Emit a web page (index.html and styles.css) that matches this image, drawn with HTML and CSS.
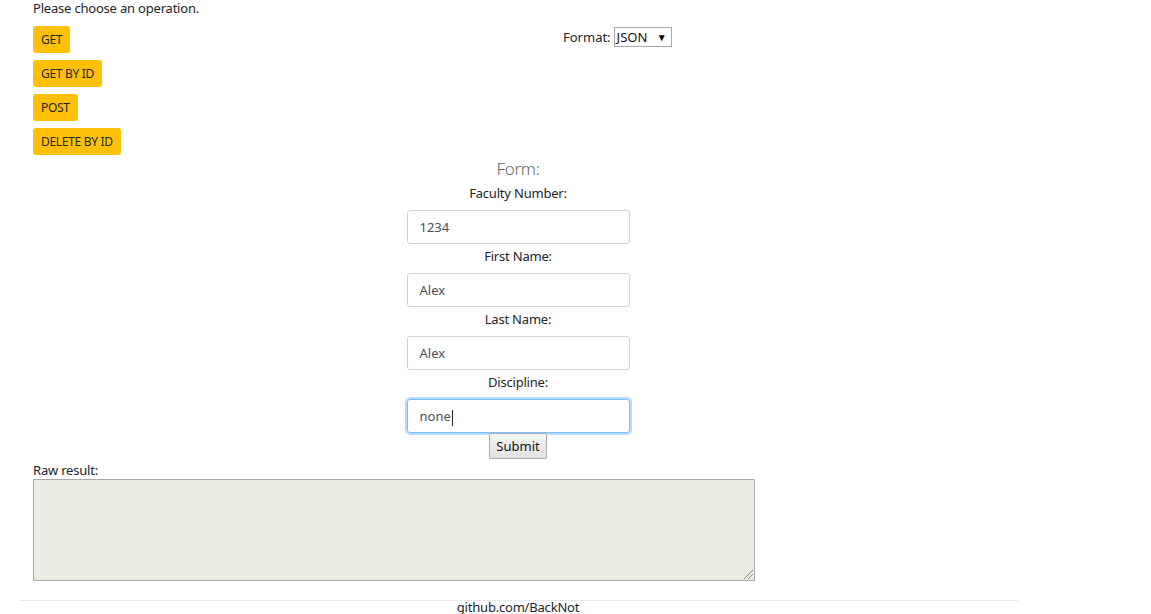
FILE: index.html
```html
<!DOCTYPE html>
<html>
<head>
<meta charset="utf-8">
<link rel="stylesheet" href="styles.css">
</head>
<body>
<div class="container">
  <div class="intro">Please choose an operation.</div>
  <div class="top">
    <div class="ops">
      <button class="op">GET</button>
      <button class="op">GET BY ID</button>
      <button class="op">POST</button>
      <button class="op">DELETE BY ID</button>
    </div>
    <div class="format">
      <span>Format:</span>
      <span class="select">JSON <span class="arrow">▼</span></span>
    </div>
  </div>
  <div class="form">
    <div class="title">Form:</div>
    <label>Faculty Number:</label>
    <div class="input">1234</div>
    <label>First Name:</label>
    <div class="input">Alex</div>
    <label>Last Name:</label>
    <div class="input">Alex</div>
    <label>Discipline:</label>
    <div class="input focus">none<span class="caret"></span></div>
    <button class="submit">Submit</button>
  </div>
  <div class="raw-label">Raw result:</div>
  <div class="raw"><span class="grip"></span></div>
  <hr class="rule">
  <div class="footer">github.com/BackNot</div>
</div>
</body>
</html>
```
FILE: styles.css
```css
html, body { margin: 0; padding: 0; background: #fff; }
body { font-family: "Noto Sans", "Open Sans", sans-serif; font-size: 13px; color: #212529; overflow: hidden; height: 614px; }
.container { width: 1000px; margin-left: 18px; padding: 0 15px; box-sizing: border-box; }
.intro { height: 16px; line-height: 16px; font-size: 13px; letter-spacing: -0.2px; }
.top { display: flex; margin-top: 10px; }
.ops { display: flex; flex-direction: column; align-items: flex-start; gap: 7px; width: 530px; }
.op { background: #ffc107; border: none; border-radius: 3px; height: 27px; padding: 0 8px; font-family: inherit; font-size: 12px; color: #212529; letter-spacing: -0.3px; }
.format { display: flex; align-items: center; gap: 3px; height: 20px; margin-top: 1px; }
.select { display: inline-flex; align-items: center; border: 1px solid #a9a9a9; height: 20px; padding: 0 4px 0 2px; font-size: 13px; box-sizing: border-box; width: 58px; justify-content: space-between; color: #111; }
.arrow { font-size: 10px; color: #000; }
.form { display: flex; flex-direction: column; align-items: center; width: 1000px; margin-left: -15px; }
.title { font-size: 17px; font-weight: 300; color: #666; height: 22px; line-height: 22px; margin-top: 3px; letter-spacing: -0.3px; }
label { display: block; height: 20px; line-height: 20px; margin-top: 6px; margin-bottom: 7px; letter-spacing: -0.2px; }
.title + label { margin-top: 3px; }
.input { width: 223px; height: 34px; box-sizing: border-box; border: 1px solid #ced4da; border-radius: 3px; padding: 0 12px; line-height: 32px; font-size: 13px; color: #495057; }
.input + label { margin-top: 2px; }
.focus { border-color: #80bdff; box-shadow: 0 0 0 2px #b8daff; }
.caret { display: inline-block; width: 1px; height: 16px; background: #222; vertical-align: middle; margin-left: 1px; }
.submit { height: 26px; padding: 0 6px; border: 1px solid #adadad; background: linear-gradient(#f3f3f3, #e2e2e2); border-radius: 1px; font-family: inherit; font-size: 13px; color: #111; }
.raw-label { height: 20px; line-height: 22px; letter-spacing: -0.2px; }
.raw { width: 722px; height: 102px; box-sizing: border-box; border: 1px solid #a9a9a9; background: #ebeae3; position: relative; }
.grip { position: absolute; right: 1px; bottom: 1px; width: 9px; height: 9px; background: linear-gradient(135deg, transparent 45%, #888 45%, #888 52%, transparent 52%, transparent 70%, #888 70%, #888 77%, transparent 77%); }
.rule { border: 0; border-top: 1px solid #e8e8e8; margin: 19px 0 0 -14px; width: 999px; }
.footer { text-align: center; width: 1000px; margin-left: -15px; line-height: 12px; letter-spacing: -0.2px; }
```
